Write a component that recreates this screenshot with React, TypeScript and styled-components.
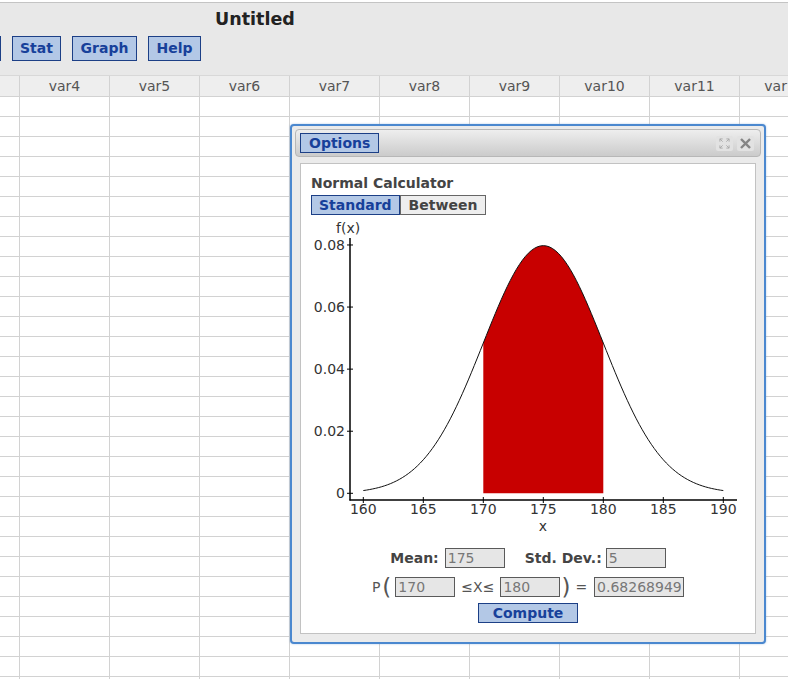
import React from "react";
import styled, { createGlobalStyle } from "styled-components";

const GlobalStyle = createGlobalStyle`
  html, body {
    margin: 0;
    padding: 0;
    background: #fff;
  }
  body {
    font-family: "DejaVu Sans", Verdana, sans-serif;
    overflow: hidden;
  }
`;

const Page = styled.div`
  position: relative;
  width: 788px;
  height: 679px;
  overflow: hidden;
  background: #fff;
`;

const Toolbar = styled.div`
  margin-top: 2px;
  height: 74px;
  box-sizing: border-box;
  background: #e8e8e8;
  border-top: 1px solid #c4c4c4;
  border-bottom: 1px solid #d8d8d8;
  padding-top: 6px;
`;

const Title = styled.div`
  margin-left: 215px;
  font-size: 17.5px;
  font-weight: bold;
  line-height: 21px;
  color: #222;
`;

const ButtonRow = styled.div`
  display: flex;
  gap: 11px;
  margin-top: 6px;
  margin-left: -49px;
`;

const BlueButton = styled.button<{ $w?: number }>`
  font-family: "DejaVu Sans", Verdana, sans-serif;
  font-size: 14px;
  font-weight: bold;
  line-height: 17px;
  color: #17409a;
  background: #b3c8e6;
  border: 1px solid #1c3f86;
  border-radius: 0;
  margin: 0;
  padding: 3px 0;
  height: 25px;
  box-sizing: border-box;
  flex: none;
  overflow: hidden;
  white-space: nowrap;
  text-align: center;
  ${(p) => p.$w && `width: ${p.$w}px;`}
`;

const Row = styled.div<{ $head?: boolean }>`
  display: flex;
  height: ${(p) => (p.$head ? 21 : 20)}px;
  box-sizing: border-box;
  overflow: hidden;
  border-bottom: 1px solid #d2d2d2;
  background: ${(p) => (p.$head ? "#eeeeee" : "#fff")};
`;

const Cell = styled.div<{ $narrow?: boolean }>`
  flex: none;
  width: ${(p) => (p.$narrow ? 20 : 90)}px;
  box-sizing: border-box;
  border-right: 1px solid #d2d2d2;
  text-align: center;
  font-size: 14px;
  line-height: 21px;
  color: #555;
`;

const Dialog = styled.div`
  position: absolute;
  left: 290px;
  top: 124px;
  width: 476px;
  height: 520px;
  box-sizing: border-box;
  border: 2px solid #4b88cf;
  border-radius: 4px;
  background: #ebebeb;
  display: flex;
  flex-direction: column;
  box-shadow: 0 0 2px rgba(75, 136, 207, 0.5);
`;

const DialogHeader = styled.div`
  margin: 3px 3px 0;
  height: 28px;
  box-sizing: border-box;
  border: 1px solid #b7b7b7;
  border-radius: 4px;
  background: linear-gradient(#eeeeee, #cbcbcb);
  display: flex;
  align-items: center;
  padding: 0 6px 0 4px;
`;

const OptionsButton = styled(BlueButton)`
  height: 20px;
  line-height: 18px;
  padding: 0 8px;
`;

const HeaderIcons = styled.div`
  margin-left: auto;
  display: flex;
  gap: 4px;
`;

const IconBox = styled.span`
  width: 17px;
  height: 15px;
  display: flex;
  align-items: center;
  justify-content: center;
  background: #e2e2e2;
  border-radius: 2px;
`;

const Panel = styled.div`
  flex: 1;
  margin: 6px 8px 8px;
  background: #fff;
  border: 1px solid #c2c2c2;
  padding: 11px 10px 0;
  display: flex;
  flex-direction: column;
`;

const Heading = styled.div`
  font-size: 14px;
  font-weight: bold;
  line-height: 17px;
  color: #444;
`;

const Tabs = styled.div`
  display: flex;
  margin-top: 3px;
`;

const Tab = styled.button<{ $active?: boolean }>`
  font-family: "DejaVu Sans", Verdana, sans-serif;
  font-size: 14px;
  font-weight: bold;
  height: 20px;
  line-height: 18px;
  box-sizing: border-box;
  margin: 0;
  padding: 0 ${(p) => (p.$active ? 7 : 8)}px;
  border-radius: 0;
  border: 1px solid ${(p) => (p.$active ? "#1c3f86" : "#666")};
  background: ${(p) => (p.$active ? "#b3c8e6" : "#eeeeee")};
  color: ${(p) => (p.$active ? "#17409a" : "#444")};
`;

const Chart = styled.svg`
  display: block;
  font-family: "DejaVu Sans", Verdana, sans-serif;
`;

const FormRow = styled.div<{ $top: number }>`
  display: flex;
  justify-content: center;
  align-items: center;
  height: 20px;
  margin-top: ${(p) => p.$top}px;
  font-size: 14px;
  color: #444;
`;

const Label = styled.span<{ $ml?: number; $mr?: number }>`
  font-weight: bold;
  margin-left: ${(p) => p.$ml ?? 0}px;
  margin-right: ${(p) => p.$mr ?? 0}px;
`;

const Text = styled.span<{ $ml?: number; $mr?: number; $big?: boolean }>`
  font-size: ${(p) => (p.$big ? 23 : 14)}px;
  line-height: 20px;
  color: #555;
  margin-left: ${(p) => p.$ml ?? 0}px;
  margin-right: ${(p) => p.$mr ?? 0}px;
`;

const Field = styled.input<{ $w?: number }>`
  width: ${(p) => p.$w ?? 60}px;
  height: 20px;
  box-sizing: border-box;
  margin: 0;
  padding: 0 2px;
  border: 1px solid #5a5a5a;
  border-radius: 0;
  background: #e6e6e6;
  font-family: "DejaVu Sans", Verdana, sans-serif;
  font-size: 14px;
  color: #777;
`;

const ComputeButton = styled(BlueButton)`
  align-self: center;
  margin-top: 6px;
  height: 20px;
  line-height: 18px;
  padding: 0 14px;
`;

const columns = ["", "var4", "var5", "var6", "var7", "var8", "var9", "var10", "var11", "var12"];

const MEAN = 175;
const SD = 5;
const pdf = (v: number) => Math.exp(-((v - MEAN) ** 2) / (2 * SD * SD)) / (SD * Math.sqrt(2 * Math.PI));
const X = (v: number) => 363.3 + (v - 160) * 12;
const Y = (p: number) => 493.3 - p * 3104;

const curvePoints = (from: number, to: number) => {
  const pts: string[] = [];
  for (let v = from; v <= to + 1e-9; v += 0.25) pts.push(`${X(v).toFixed(2)},${Y(pdf(v)).toFixed(2)}`);
  return pts;
};

const NormalChart = () => {
  const line = "M" + curvePoints(160, 190).join("L");
  const area = `M${X(170)},${Y(0)}L` + curvePoints(170, 180).join("L") + `L${X(180)},${Y(0)}Z`;
  const yTicks = [0, 0.02, 0.04, 0.06, 0.08];
  const xTicks = [160, 165, 170, 175, 180, 185, 190];
  return (
    <Chart width={434} height={333} viewBox="311 215 434 333">
      <path d={area} fill="#c80000" />
      <path d={line} fill="none" stroke="#111" strokeWidth={1} />
      <line x1={350} y1={238} x2={350} y2={500.5} stroke="#000" strokeWidth={1.5} />
      <line x1={349.5} y1={500} x2={737} y2={500} stroke="#000" strokeWidth={1.5} />
      {yTicks.map((t) => (
        <g key={t}>
          <line x1={347} y1={Y(t)} x2={353} y2={Y(t)} stroke="#000" strokeWidth={1} />
          <text x={345} y={Y(t) + 5} textAnchor="end" fontSize={14} fill="#333">
            {t === 0 ? "0" : t.toFixed(2)}
          </text>
        </g>
      ))}
      {xTicks.map((v) => (
        <g key={v}>
          <line x1={X(v)} y1={497} x2={X(v)} y2={503} stroke="#000" strokeWidth={1} />
          <text x={X(v)} y={514} textAnchor="middle" fontSize={14} fill="#333">
            {v}
          </text>
        </g>
      ))}
      <text x={336} y={233} fontSize={14} fill="#333">f(x)</text>
      <text x={543} y={531} textAnchor="middle" fontSize={14} fill="#333">x</text>
    </Chart>
  );
};

const ExpandIcon = () => (
  <svg width="11" height="11" viewBox="0 0 12 12" fill="none" stroke="#a8a8a8" strokeWidth="1">
    <path d="M1 4V1h3M1 1l3 3M11 4V1H8M11 1L8 4M1 8v3h3M1 11l3-3M11 8v3H8M11 11L8 8" />
  </svg>
);

const CloseIcon = () => (
  <svg width="11" height="11" viewBox="0 0 12 12" fill="none" stroke="#858585" strokeWidth="2.6" strokeLinecap="square">
    <path d="M2 2l8 8M10 2l-8 8" />
  </svg>
);

const App = () => {
  const rows = Array.from({ length: 30 }, (_, i) => i);
  return (
    <Page>
      <GlobalStyle />
      <Toolbar>
        <Title>Untitled</Title>
        <ButtonRow>
          <BlueButton $w={50}>Data</BlueButton>
          <BlueButton $w={49}>Stat</BlueButton>
          <BlueButton $w={65}>Graph</BlueButton>
          <BlueButton $w={53}>Help</BlueButton>
        </ButtonRow>
      </Toolbar>
      <div>
        <Row $head>
          {columns.map((c, i) => (
            <Cell key={i} $narrow={i === 0}>{c}</Cell>
          ))}
        </Row>
        {rows.map((r) => (
          <Row key={r}>
            {columns.map((c, i) => (
              <Cell key={i} $narrow={i === 0} />
            ))}
          </Row>
        ))}
      </div>
      <Dialog>
        <DialogHeader>
          <OptionsButton>Options</OptionsButton>
          <HeaderIcons>
            <IconBox><ExpandIcon /></IconBox>
            <IconBox><CloseIcon /></IconBox>
          </HeaderIcons>
        </DialogHeader>
        <Panel>
          <Heading>Normal Calculator</Heading>
          <Tabs>
            <Tab $active>Standard</Tab>
            <Tab>Between</Tab>
          </Tabs>
          <NormalChart />
          <FormRow $top={0}>
            <Label $mr={6}>Mean:</Label>
            <Field readOnly value="175" />
            <Label $ml={20} $mr={4}>Std. Dev.:</Label>
            <Field readOnly value="5" />
          </FormRow>
          <FormRow $top={9}>
            <Text>P</Text>
            <Text $big $ml={2} $mr={4}>(</Text>
            <Field readOnly value="170" />
            <Text $ml={6} $mr={6}>≤X≤</Text>
            <Field readOnly value="180" />
            <Text $big $ml={1} $mr={5}>)</Text>
            <Text $mr={7}>=</Text>
            <Field readOnly $w={90} value="0.68268949" />
          </FormRow>
          <ComputeButton>Compute</ComputeButton>
        </Panel>
      </Dialog>
    </Page>
  );
};

export default App;
